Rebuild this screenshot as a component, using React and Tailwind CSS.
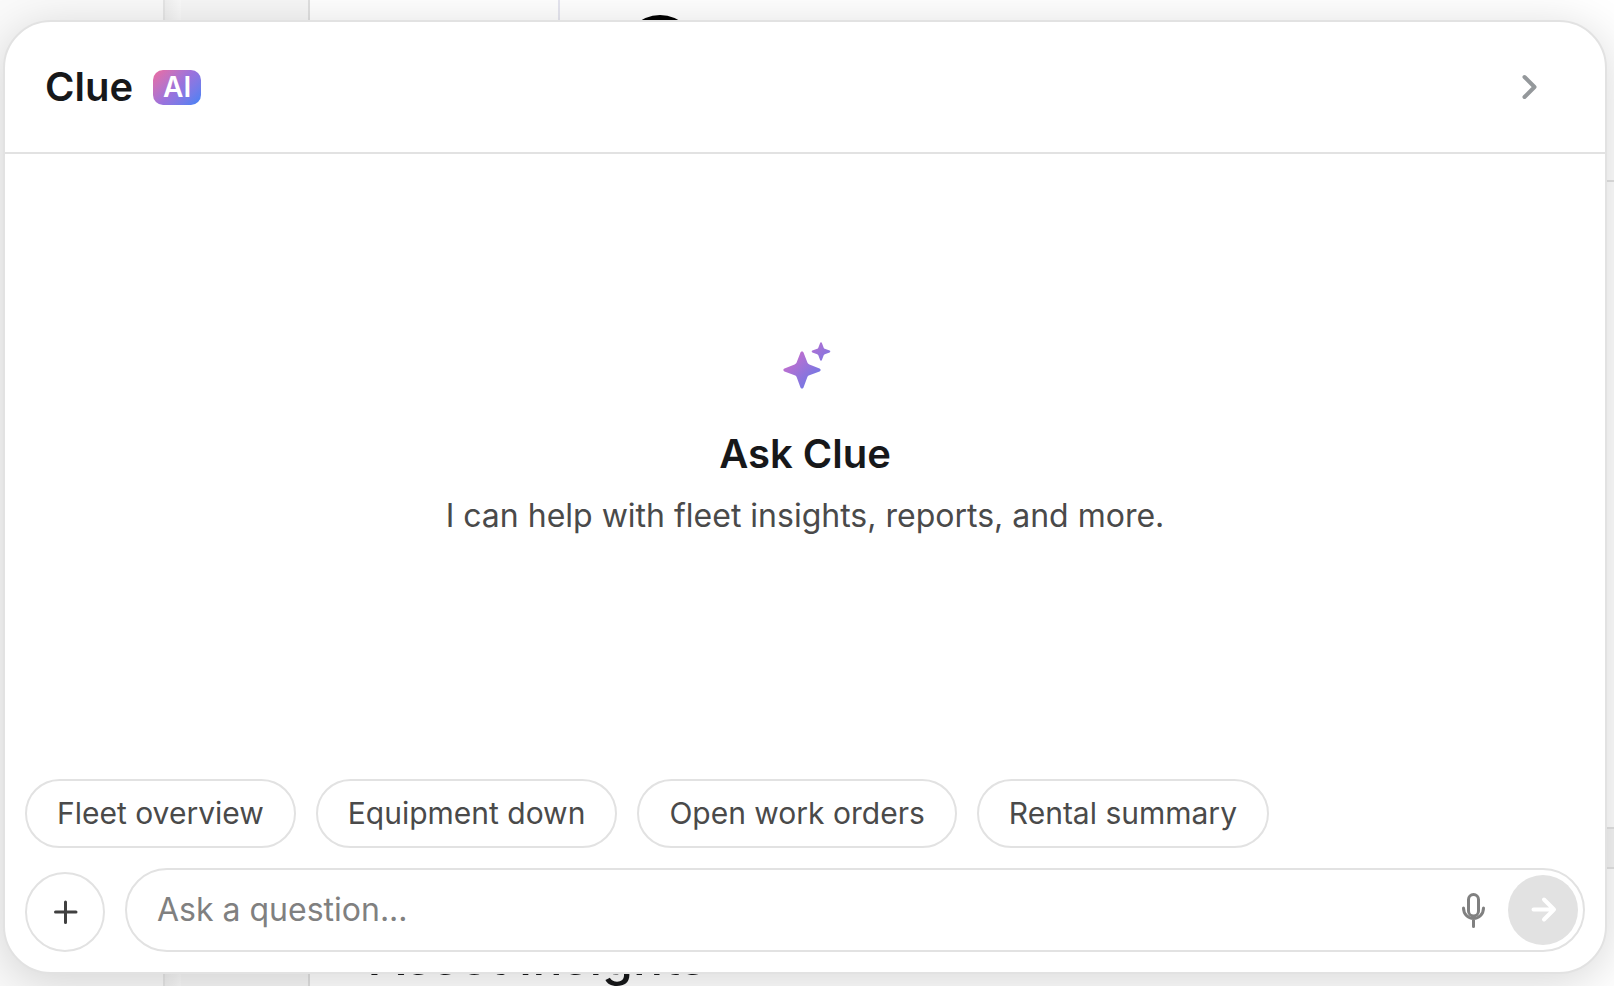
import React, { useState } from 'react';

const suggestions = ['Fleet overview', 'Equipment down', 'Open work orders', 'Rental summary'];

const SparkleIcon = () => (
  <svg width="80" height="80" viewBox="0 0 80 80" aria-hidden="true">
    <defs>
      <linearGradient id="sparkle" gradientUnits="userSpaceOnUse" x1="12" y1="12" x2="68" y2="68">
        <stop offset="0" stopColor="#ee6a9f" />
        <stop offset="0.3" stopColor="#bb6fd0" />
        <stop offset="0.6" stopColor="#8276e0" />
        <stop offset="1" stopColor="#3b82f6" />
      </linearGradient>
    </defs>
    <g fill="url(#sparkle)">
      <path d="M37 21.500c.8 0 1.400.5 1.600 1.200l3.700 9.600c.4 1.100 1 1.700 2.100 2.100l10.100 4.100c.7.2 1.100.8 1.100 1.500s-.4 1.200-1.100 1.400l-10.100 3.800c-1.100.4-1.700 1-2.100 2.100l-3.700 10c-.2.800-.8 1.200-1.600 1.200s-1.400-.4-1.600-1.200l-3.700-10c-.4-1.100-1-1.700-2.100-2.100l-10.100-3.800c-.7-.2-1.100-.7-1.100-1.400s.4-1.300 1.100-1.500l10.100-4.100c1.100-.4 1.700-1 2.100-2.100l3.700-9.600c.2-.7.8-1.200 1.600-1.200z" />
      <path d="M56 12.200c.5 0 .8.3.9.700l1.800 4.800c.2.600.5.900 1.100 1.100l4.800 1.800c.4.100.7.500.7.900s-.3.800-.7.900l-4.800 1.800c-.6.200-.9.500-1.100 1.100l-1.800 4.700c-.1.400-.4.700-.9.700s-.8-.3-.9-.7l-1.800-4.700c-.2-.6-.5-.9-1.100-1.100l-4.800-1.800c-.4-.1-.7-.5-.7-.9s.3-.8.7-.9l4.800-1.800c.6-.2.9-.5 1.100-1.100l1.800-4.800c.1-.4.4-.7.9-.7z" />
    </g>
  </svg>
);

const MicIcon = () => (
  <svg width="40" height="40" viewBox="0 0 40 40" fill="none" stroke="#808080" strokeWidth="3" strokeLinecap="round" aria-hidden="true">
    <rect x="14.500" y="4.500" width="10" height="21.500" rx="5" />
    <path d="M9.500 18c0 6 4.500 10.500 10 10.500s10-4.500 10-10.500M19.500 28.500v8" />
  </svg>
);

// The dashboard that sits behind the chat panel
const Dashboard = () => (
  <div className="flex h-screen overflow-hidden bg-white">
    <aside className="w-[165px] shrink-0 border-r-2 border-[#e6e6e6] bg-[#fafafa]" />
    <div className="w-4 shrink-0 bg-gradient-to-r from-[#f0f0f0] to-[#fafafa]" />
    <div className="w-[129px] shrink-0 border-r-2 border-[#e0e0e0] bg-[#f7f7f7]" />
    <main className="flex min-w-0 flex-1 flex-col">
      <div className="flex h-[182px] shrink-0 border-b-2 border-[#e3e3e3]">
        <div className="w-[250px] border-r-2 border-[#e6e6f0]" />
        <div className="px-[62px] pt-[15px]">
          <div className="h-[76px] w-[76px] rounded-full bg-black" />
        </div>
      </div>
      <div className="flex-1" />
      <div className="h-[42px] shrink-0 border-y-2 border-[#e3e3e3] bg-[#f5f5f5]" />
      <div className="h-[117px] shrink-0 px-[60px] pt-[56px]">
        <h2 className="text-[50px] leading-[64px] font-medium text-[#17181a]">Asset Insights</h2>
      </div>
    </main>
  </div>
);

const App = () => {
  const [question, setQuestion] = useState('');

  return (
    <div className="relative font-['Inter',sans-serif]">
      <Dashboard />
      <div className="absolute inset-0 flex pt-5 pr-[7px] pb-3 pl-[3px]">
        <section className="flex flex-1 flex-col overflow-hidden rounded-[48px] border-2 border-[#e2e2e2] bg-white shadow-[0_8px_48px_rgba(0,0,0,0.16)]">
          <header className="flex h-[132px] shrink-0 items-center justify-between border-b-2 border-[#e2e2e2] pr-[52px] pl-10">
            <div className="flex items-center gap-5">
              <h1 className="text-[40px] leading-[48px] font-semibold text-[#17181a]">Clue</h1>
              <span className="rounded-[10px] bg-linear-135 from-[#ee6a9f] via-[#9b72dc] to-[#3b82f6] px-[10px] text-[28px] leading-[35px] font-semibold text-white">
                AI
              </span>
            </div>
            <button type="button" aria-label="Close" className="flex h-12 w-12 items-center justify-center">
              <svg width="40" height="40" viewBox="0 0 40 40" fill="none" stroke="#94989b" strokeWidth="4" strokeLinecap="round" strokeLinejoin="round">
                <path d="M15.500 10l10 10-10 10" />
              </svg>
            </button>
          </header>

          <div className="flex flex-1 flex-col items-center justify-center pb-11">
            <SparkleIcon />
            <h2 className="mt-5 text-[40px] leading-[48px] font-semibold text-[#17181a]">Ask Clue</h2>
            <p className="mt-[14px] text-[32px] leading-[48px] text-[#4a4a4a]">I can help with fleet insights, reports, and more.</p>
          </div>

          <div className="flex shrink-0 flex-col gap-5 p-5">
            <div className="flex flex-wrap gap-5">
              {suggestions.map((label) => (
                <button
                  key={label}
                  type="button"
                  onClick={() => setQuestion(label)}
                  className="rounded-full border-2 border-[#e2e2e2] px-[30px] py-[10px] text-[30px] leading-[45px] text-[#4a4a4a]"
                >
                  {label}
                </button>
              ))}
            </div>

            <form className="flex items-end gap-5" onSubmit={(e) => e.preventDefault()}>
              <button type="button" aria-label="Add attachment" className="flex h-20 w-20 shrink-0 items-center justify-center rounded-full border-2 border-[#e2e2e2]">
                <svg width="40" height="40" viewBox="0 0 40 40" fill="none" stroke="#404040" strokeWidth="3" strokeLinecap="round">
                  <path d="M20.500 10v20.500M10.500 20h20.500" />
                </svg>
              </button>
              <div className="flex h-[84px] min-w-0 flex-1 items-center rounded-full border-2 border-[#e2e2e2] pr-[5px] pl-[30px]">
                <input
                  aria-label="Ask a question"
                  value={question}
                  onChange={(e) => setQuestion(e.target.value)}
                  placeholder="Ask a question..."
                  className="h-12 min-w-0 flex-1 bg-transparent text-[32px] text-[#17181a] outline-none placeholder:text-[#808080]"
                />
                <button type="button" aria-label="Voice input" className="mr-[14px] flex h-10 w-10 items-center justify-center">
                  <MicIcon />
                </button>
                <button type="submit" aria-label="Send" className="flex h-[70px] w-[70px] shrink-0 items-center justify-center rounded-full bg-[#e2e2e2]">
                  <svg width="40" height="40" viewBox="0 0 40 40" fill="none" stroke="white" strokeWidth="4" strokeLinecap="round" strokeLinejoin="round">
                    <path d="M10.500 19.500h20.500M21 9.500l10 10-10 10" />
                  </svg>
                </button>
              </div>
            </form>
          </div>
        </section>
      </div>
    </div>
  );
};

export default App;
